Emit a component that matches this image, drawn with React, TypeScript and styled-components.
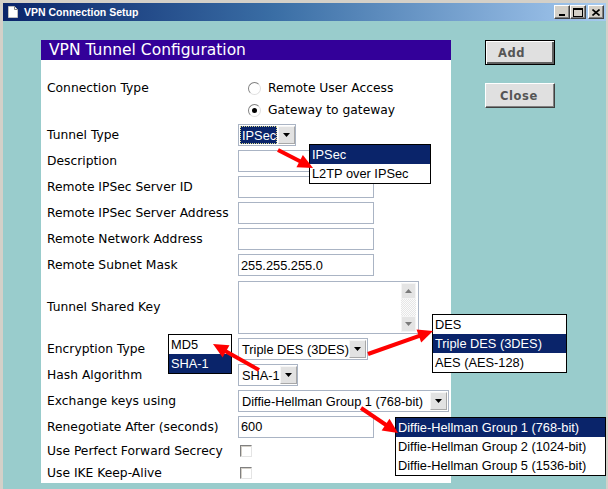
import React from 'react';
import styled, { createGlobalStyle } from 'styled-components';

const uiFont = `"DejaVu Sans", Verdana, sans-serif`;
const fieldFont = `"Liberation Sans", Arial, sans-serif`;

const GlobalStyle = createGlobalStyle`
  html, body {
    margin: 0;
    padding: 0;
    background: #d4d0c8;
  }
  * {
    box-sizing: border-box;
  }
`;

const Window = styled.div`
  position: relative;
  width: 608px;
  height: 489px;
  padding: 3px 2px 0 3px;
  background: #d4d0c8;
  display: flex;
  flex-direction: column;
  overflow: hidden;
`;

const TitleBar = styled.div`
  height: 18px;
  display: flex;
  align-items: center;
  padding: 0 2px 0 5px;
  background: linear-gradient(to right, #0a246a 0%, #3a6ea5 45%, #a6caf0 100%);
`;

const TitleText = styled.span`
  margin-left: 6px;
  font-family: "Liberation Sans", Arial, sans-serif;
  font-weight: bold;
  font-size: 10.5px;
  color: #fff;
  flex: 1;
`;

const CtrlButton = styled.div<{ $gap?: boolean }>`
  width: 16px;
  height: 14px;
  margin-left: ${({ $gap }) => ($gap ? '2px' : '0')};
  background: #d4d0c8;
  border: 1px solid;
  border-color: #fff #404040 #404040 #fff;
  box-shadow: inset -1px -1px 0 #808080;
  display: flex;
  align-items: center;
  justify-content: center;
`;

const Client = styled.div`
  flex: 1;
  background: #99cccc;
  display: flex;
  align-items: flex-start;
  padding: 19px 0 0 38px;
`;

const Panel = styled.div`
  width: 410px;
  height: 443px;
  background: #fff;
  display: flex;
  flex-direction: column;
`;

const PanelHeader = styled.div`
  height: 20px;
  line-height: 20px;
  padding-left: 8px;
  background: #330099;
  color: #fff;
  font-family: ${uiFont};
  font-size: 15.5px;
`;

const Form = styled.div`
  padding-top: 17px;
  display: flex;
  flex-direction: column;
`;

const Row = styled.div<{ $h: number; $top?: boolean }>`
  height: ${({ $h }) => $h}px;
  display: grid;
  grid-template-columns: 197px 1fr;
  align-items: ${({ $top }) => ($top ? 'start' : 'center')};
`;

const Label = styled.div<{ $lh?: number }>`
  padding-left: 6px;
  font-family: ${uiFont};
  font-size: 12.3px;
  color: #000;
  white-space: nowrap;
  line-height: ${({ $lh }) => ($lh ? `${$lh}px` : 'normal')};
`;

const RadioGroup = styled.div`
  display: flex;
  flex-direction: column;
`;

const RadioOption = styled.div`
  height: 22px;
  display: flex;
  align-items: center;
  padding-left: 10px;
  gap: 7px;
  font-family: ${uiFont};
  font-size: 12.3px;
`;

const RadioDot = styled.span<{ $on?: boolean }>`
  width: 13px;
  height: 13px;
  border-radius: 50%;
  border: 1px solid;
  border-color: #808080 #e0e0e0 #e0e0e0 #808080;
  background: #fff;
  display: flex;
  align-items: center;
  justify-content: center;

  &::after {
    content: '';
    width: 5px;
    height: 5px;
    border-radius: 50%;
    background: ${({ $on }) => ($on ? '#000' : 'transparent')};
  }
`;

const TextInput = styled.input`
  width: 136px;
  height: 22px;
  margin: 0;
  padding: 0 2px;
  border: 1px solid #aab4c4;
  font-family: ${fieldFont};
  font-size: 12.8px;
  color: #000;
  background: #fff;
  outline: none;
`;

const TextArea = styled.div`
  width: 181px;
  height: 53px;
  border: 1px solid #aab4c4;
  display: flex;
  justify-content: flex-end;
  padding: 1px 2px 1px 0;
`;

const ScrollBar = styled.div`
  width: 15px;
  display: flex;
  flex-direction: column;
  justify-content: space-between;
  background-color: #f2f2f2;
  background-image: repeating-conic-gradient(#e6e6e6 0% 25%, #fbfbfb 0% 50%);
  background-size: 2px 2px;
`;

const ScrollBtn = styled.div`
  height: 16px;
  background: #e4e4e4;
  border: 1px solid #f4f4f4;
  display: flex;
  align-items: center;
  justify-content: center;
`;

const SelectBox = styled.div<{ $w: number }>`
  width: ${({ $w }) => $w}px;
  height: 22px;
  border: 1px solid #aab4c4;
  background: #fff;
  display: flex;
  align-items: center;
  padding: 1px;
`;

const SelectValue = styled.span<{ $focus?: boolean }>`
  flex: 1;
  height: 100%;
  display: flex;
  align-items: center;
  padding-left: ${({ $focus }) => ($focus ? '1px' : '2px')};
  font-family: ${fieldFont};
  font-size: 12.8px;
  white-space: nowrap;
  color: ${({ $focus }) => ($focus ? '#fff' : '#000')};
  background: ${({ $focus }) => ($focus ? '#0a246a' : 'transparent')};
  border: ${({ $focus }) => ($focus ? '1px dotted #d8d890' : 'none')};
  margin-right: ${({ $focus }) => ($focus ? '1px' : '0')};
`;

const DropBtn = styled.span`
  width: 17px;
  height: 18px;
  flex: none;
  background: #e2e2e2;
  border: 1px solid;
  border-color: #f6f6f6 #a8a8a8 #a8a8a8 #f6f6f6;
  display: flex;
  align-items: center;
  justify-content: center;
`;

const CheckBox = styled.span`
  margin-left: 2px;
  width: 12px;
  height: 12px;
  border: 1px solid;
  border-color: #808080 #e4e4e4 #e4e4e4 #808080;
  background: #fff;
  box-shadow: inset 1px 1px 0 #d4d0c8;
`;

const ButtonColumn = styled.div`
  margin-left: 34px;
  width: 70px;
  display: flex;
  flex-direction: column;
  gap: 18px;
`;

const DialogButton = styled.button<{ $default?: boolean }>`
  width: 70px;
  height: 25px;
  margin: 0;
  padding: 0 0 0 ${({ $default }) => ($default ? '0' : '2px')};
  text-align: left;
  text-indent: 12px;
  background: #e0e0e0;
  border: 1px solid;
  border-color: ${({ $default }) =>
    $default ? '#000' : '#fff #404040 #404040 #fff'};
  box-shadow: ${({ $default }) =>
    $default
      ? 'inset 1px 1px 0 #fff, inset -2px -2px 0 #606060'
      : 'inset -1px -1px 0 #808080'};
  font-family: ${uiFont};
  font-weight: bold;
  font-size: 11.5px;
  letter-spacing: 0.6px;
  color: #555;
`;

const DropList = styled.div<{ $x: number; $y: number; $w: number }>`
  position: absolute;
  left: ${({ $x }) => $x}px;
  top: ${({ $y }) => $y}px;
  width: ${({ $w }) => $w}px;
  background: #fff;
  border: 1px solid #000;
  display: flex;
  flex-direction: column;
`;

const DropItem = styled.div<{ $sel?: boolean }>`
  height: 19px;
  line-height: 19px;
  padding-left: 2px;
  font-family: ${fieldFont};
  font-size: 12.8px;
  white-space: nowrap;
  color: ${({ $sel }) => ($sel ? '#fff' : '#000')};
  background: ${({ $sel }) => ($sel ? '#0a246a' : '#fff')};
`;

const ArrowLayer = styled.svg`
  position: absolute;
  left: 0;
  top: 0;
  pointer-events: none;
`;

const Caret = ({ up }: { up?: boolean }) => (
  <svg width="7" height="4" viewBox="0 0 7 4">
    <polygon points={up ? '0,4 7,4 3.5,0' : '0,0 7,0 3.5,4'} fill="#000" />
  </svg>
);

const GrayCaret = ({ up }: { up?: boolean }) => (
  <svg width="7" height="4" viewBox="0 0 7 4">
    <polygon points={up ? '0,4 7,4 3.5,0' : '0,0 7,0 3.5,4'} fill="#7a7a7a" />
  </svg>
);

const Select = ({ w, value, focus }: { w: number; value: string; focus?: boolean }) => (
  <SelectBox $w={w}>
    <SelectValue $focus={focus}>{value}</SelectValue>
    <DropBtn>
      <Caret />
    </DropBtn>
  </SelectBox>
);

const arrows: [number, number, number, number][] = [
  [278, 150, 313, 168],
  [259, 370, 213, 344],
  [368, 354, 433, 331],
  [361, 408, 398, 433],
];

const Arrow = ({ x1, y1, x2, y2 }: { x1: number; y1: number; x2: number; y2: number }) => {
  const dx = x2 - x1;
  const dy = y2 - y1;
  const len = Math.hypot(dx, dy);
  const ux = dx / len;
  const uy = dy / len;
  const head = 15;
  const half = 7;
  const bx = x2 - ux * head;
  const by = y2 - uy * head;
  const pts = `${x2},${y2} ${bx - uy * half},${by + ux * half} ${bx + uy * half},${by - ux * half}`;
  return (
    <g>
      <line x1={x1} y1={y1} x2={bx + ux * 2} y2={by + uy * 2} stroke="#ff0000" strokeWidth={4} />
      <polygon points={pts} fill="#ff0000" />
    </g>
  );
};

const App: React.FC = () => {
  return (
    <>
      <GlobalStyle />
      <Window>
        <TitleBar>
          <svg width="10" height="12" viewBox="0 0 10 12">
            <path d="M0.5 0.5 H6.5 L9.5 3.5 V11.5 H0.5 Z" fill="#fff" stroke="#c0c0c0" />
            <path d="M6.5 0.5 V3.5 H9.5" fill="none" stroke="#808080" />
          </svg>
          <TitleText>VPN Connection Setup</TitleText>
          <CtrlButton>
            <svg width="8" height="7" viewBox="0 0 8 7">
              <rect x="1" y="5" width="6" height="2" fill="#000" />
            </svg>
          </CtrlButton>
          <CtrlButton>
            <svg width="10" height="9" viewBox="0 0 10 9">
              <rect x="0.5" y="0.5" width="9" height="8" fill="none" stroke="#000" />
              <rect x="0" y="0" width="10" height="2" fill="#000" />
            </svg>
          </CtrlButton>
          <CtrlButton $gap>
            <svg width="8" height="7" viewBox="0 0 8 7">
              <path d="M0.5 0.5 L7.5 6.5 M7.5 0.5 L0.5 6.5" stroke="#000" strokeWidth="1.6" />
            </svg>
          </CtrlButton>
        </TitleBar>

        <Client>
          <Panel>
            <PanelHeader>VPN Tunnel Configuration</PanelHeader>
            <Form>
              <Row $h={45} $top>
                <Label $lh={22}>Connection Type</Label>
                <RadioGroup>
                  <RadioOption>
                    <RadioDot />
                    Remote User Access
                  </RadioOption>
                  <RadioOption>
                    <RadioDot $on />
                    Gateway to gateway
                  </RadioOption>
                </RadioGroup>
              </Row>
              <Row $h={26}>
                <Label>Tunnel Type</Label>
                <Select w={58} value="IPSec" focus />
              </Row>
              <Row $h={26}>
                <Label>Description</Label>
                <TextInput readOnly value="" />
              </Row>
              <Row $h={26}>
                <Label>Remote IPSec Server ID</Label>
                <TextInput readOnly value="" />
              </Row>
              <Row $h={26}>
                <Label>Remote IPSec Server Address</Label>
                <TextInput readOnly value="" />
              </Row>
              <Row $h={26}>
                <Label>Remote Network Address</Label>
                <TextInput readOnly value="" />
              </Row>
              <Row $h={26}>
                <Label>Remote Subnet Mask</Label>
                <TextInput readOnly value="255.255.255.0" />
              </Row>
              <Row $h={58}>
                <Label>Tunnel Shared Key</Label>
                <TextArea>
                  <ScrollBar>
                    <ScrollBtn>
                      <GrayCaret up />
                    </ScrollBtn>
                    <ScrollBtn>
                      <GrayCaret />
                    </ScrollBtn>
                  </ScrollBar>
                </TextArea>
              </Row>
              <Row $h={26}>
                <Label>Encryption Type</Label>
                <Select w={130} value="Triple DES (3DES)" />
              </Row>
              <Row $h={26}>
                <Label>Hash Algorithm</Label>
                <Select w={60} value="SHA-1" />
              </Row>
              <Row $h={26}>
                <Label>Exchange keys using</Label>
                <Select w={211} value="Diffie-Hellman Group 1 (768-bit)" />
              </Row>
              <Row $h={25}>
                <Label>Renegotiate After (seconds)</Label>
                <TextInput readOnly value="600" />
              </Row>
              <Row $h={23}>
                <Label>Use Perfect Forward Secrecy</Label>
                <CheckBox />
              </Row>
              <Row $h={21}>
                <Label>Use IKE Keep-Alive</Label>
                <CheckBox />
              </Row>
            </Form>
          </Panel>

          <ButtonColumn>
            <DialogButton $default>Add</DialogButton>
            <DialogButton>Close</DialogButton>
          </ButtonColumn>
        </Client>

        <DropList $x={309} $y={144} $w={122}>
          <DropItem $sel>IPSec</DropItem>
          <DropItem>L2TP over IPSec</DropItem>
        </DropList>
        <DropList $x={168} $y={334} $w={64}>
          <DropItem>MD5</DropItem>
          <DropItem $sel>SHA-1</DropItem>
        </DropList>
        <DropList $x={432} $y={314} $w={135}>
          <DropItem>DES</DropItem>
          <DropItem $sel>Triple DES (3DES)</DropItem>
          <DropItem>AES (AES-128)</DropItem>
        </DropList>
        <DropList $x={395} $y={417} $w={211}>
          <DropItem $sel>Diffie-Hellman Group 1 (768-bit)</DropItem>
          <DropItem>Diffie-Hellman Group 2 (1024-bit)</DropItem>
          <DropItem>Diffie-Hellman Group 5 (1536-bit)</DropItem>
        </DropList>

        <ArrowLayer width="608" height="489" viewBox="0 0 608 489">
          {arrows.map(([x1, y1, x2, y2], i) => (
            <Arrow key={i} x1={x1} y1={y1} x2={x2} y2={y2} />
          ))}
        </ArrowLayer>
      </Window>
    </>
  );
};

export default App;
